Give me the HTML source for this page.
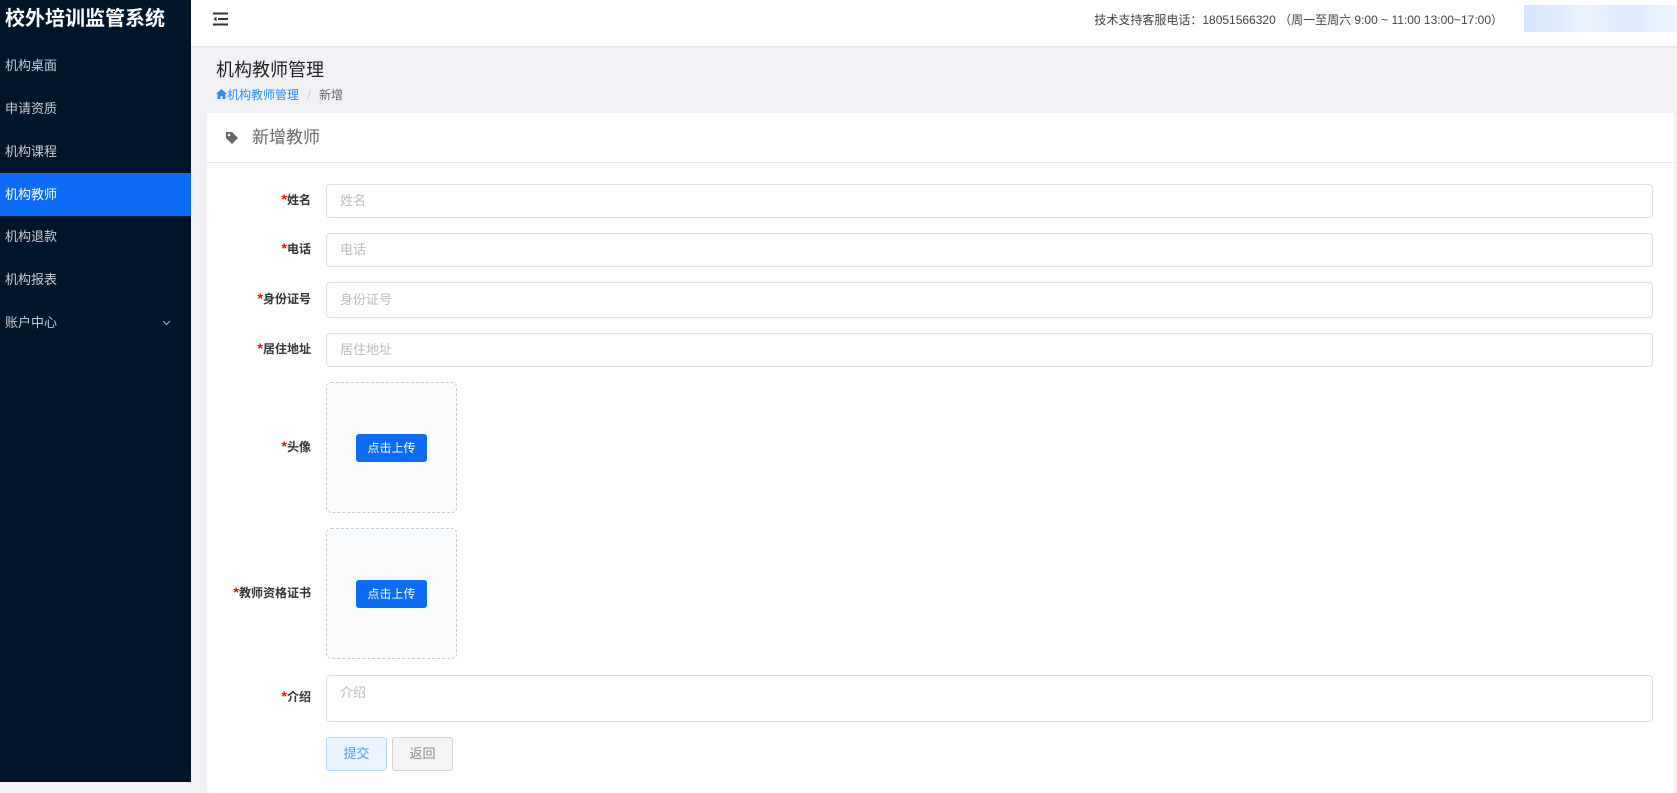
<!DOCTYPE html>
<html><head><meta charset="utf-8"><style>
*{margin:0;padding:0;box-sizing:border-box}
body{width:1677px;height:782px;overflow:hidden;font-family:"Liberation Sans","Noto Sans CJK SC",sans-serif;background:#f0f2f5;position:relative;font-size:13px;color:#333}
.sb{position:absolute;left:0;top:0;width:191px;height:782px;background:#001529}
.logo{position:absolute;left:5px;top:6px;color:#fff;font-size:20px;font-weight:bold;line-height:26px}
.mi{position:absolute;left:0;width:191px;height:43px;line-height:43px;padding-left:5px;color:#c8ccd2;font-size:13px}
.mi.act{background:#0c6cf7;color:#fff}
.hd{position:absolute;left:191px;top:0;right:0;height:46px;background:#fff;box-shadow:0 1px 3px rgba(0,0,0,.08)}
.ham{position:absolute;left:21px;top:12px}
.tel{position:absolute;right:174px;top:11px;font-size:12px;color:#444}
.blur{position:absolute;right:0;top:5px;width:153px;height:27px;background:linear-gradient(90deg,#d3e5fd,#eaf2fe 40%,#dceafd 70%,#eef4fe)}
.pt{position:absolute;left:216px;top:56px;font-size:18px;color:#222}
.bc{position:absolute;left:216px;top:86px;font-size:12px;color:#666}
.bc a{color:#2d8cf0}
.card{position:absolute;left:207px;top:113px;width:1467px;height:680px;background:#fff;border-radius:3px}
.ch{height:50px;border-bottom:1px solid #e6e8ec;font-size:17px;color:#666;line-height:50px;padding-left:45px;position:relative}
.lb{position:absolute;right:1363px;font-size:12px;font-weight:bold;color:#333;white-space:nowrap}
.lb b{color:#f00;font-size:14px}
.in{position:absolute;left:119px;width:1327px;border:1px solid #dcdfe6;border-radius:4px;color:#bbb;font-size:13px;padding-left:13px}
.up{position:absolute;left:119px;width:131px;height:131px;border:1px dashed #c5ccd8;border-radius:5px;background:#fafbfd}
.ub{position:absolute;left:29px;top:51px;width:71px;height:28px;background:#0c6cf7;color:#fff;border-radius:3px;font-size:12px;text-align:center;line-height:28px}
.bt{position:absolute;top:624px;width:61px;height:34px;border-radius:3px;text-align:center;line-height:32px;font-size:13px}
</style></head><body>
<div class="sb">
<div class="logo">校外培训监管系统</div>
<div class="mi" style="top:44px">机构桌面</div>
<div class="mi" style="top:87px">申请资质</div>
<div class="mi" style="top:130px">机构课程</div>
<div class="mi act" style="top:173px">机构教师</div>
<div class="mi" style="top:215px">机构退款</div>
<div class="mi" style="top:258px">机构报表</div>
<div class="mi" style="top:301px">账户中心<svg style="position:absolute;right:20px;top:19px" width="9" height="6" viewBox="0 0 9 6"><path d="M1 1l3.5 3.5L8 1" stroke="#aab" fill="none"/></svg></div>
</div>
<div class="hd">
<svg class="ham" width="17" height="14" viewBox="0 0 17 14"><path d="M1 1.5H16M6 7H16M1 12.5H16" stroke="#333" stroke-width="2"/><path d="M4.5 4.5L1.5 7l3 2.5z" fill="#333"/></svg>
<div class="tel">技术支持客服电话：18051566320 （周一至周六 9:00 ~ 11:00 13:00~17:00）</div>
<div class="blur"></div>
</div>
<div class="pt">机构教师管理</div>
<div class="bc"><a><svg width="11" height="10" viewBox="0 0 11 10"><path d="M5.5 0L0 5h1.5v5h3V7h2v3h3V5H11z" fill="#2d8cf0"/></svg>机构教师管理</a> <span style="color:#ccc;margin:0 5px">/</span> 新增</div>
<div class="card">
<div class="ch"><svg style="position:absolute;left:18px;top:18px" width="14" height="14" viewBox="0 0 14 14"><path d="M1 1h6l6 6-6 6-6-6z" fill="#666"/><circle cx="4" cy="4" r="1.3" fill="#fff"/></svg>新增教师</div>
<div class="lb" style="top:78px"><b>*</b>姓名</div>
<div class="in" style="top:71px;height:34px;line-height:32px">姓名</div>
<div class="lb" style="top:127px"><b>*</b>电话</div>
<div class="in" style="top:120px;height:34px;line-height:32px">电话</div>
<div class="lb" style="top:177px"><b>*</b>身份证号</div>
<div class="in" style="top:169px;height:36px;line-height:34px">身份证号</div>
<div class="lb" style="top:227px"><b>*</b>居住地址</div>
<div class="in" style="top:220px;height:34px;line-height:32px">居住地址</div>
<div class="lb" style="top:325px"><b>*</b>头像</div>
<div class="up" style="top:269px"><div class="ub">点击上传</div></div>
<div class="lb" style="top:471px"><b>*</b>教师资格证书</div>
<div class="up" style="top:415px"><div class="ub">点击上传</div></div>
<div class="lb" style="top:575px"><b>*</b>介绍</div>
<div class="in" style="top:562px;height:47px;padding-top:6px">介绍</div>
<div class="bt" style="left:119px;background:#ecf5ff;border:1px solid #b3d8ff;color:#409eff">提交</div>
<div class="bt" style="left:185px;background:#f4f4f5;border:1px solid #d3d4d6;color:#888">返回</div>
</div>
</body></html>
